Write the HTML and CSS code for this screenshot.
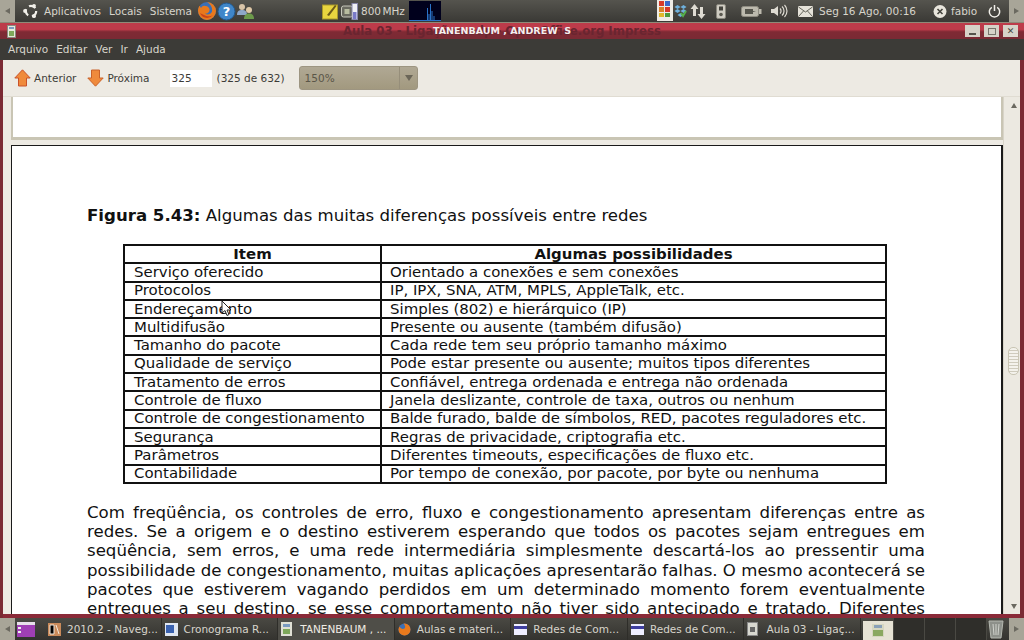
FILE: index.html
```html
<!DOCTYPE html>
<html lang="pt">

<head>
    <meta charset="UTF-8" />
    <link rel="stylesheet" href="styles.css">
    <title>TANENBAUM , ANDREW S</title>
</head>

<body>
    <div class="panel top-panel">
        <div class="panel-left">
            <div class="handle"><span class="arrow-left"></span></div>
            <svg class="ubuntu" width="18" height="18" viewBox="0 0 18 18">
                <circle cx="9" cy="9" r="5.2" fill="none" stroke="#f2f0ea" stroke-width="2.2" stroke-dasharray="7 3.9" />
                <circle cx="3" cy="9" r="1.9" fill="#f2f0ea" />
                <circle cx="12" cy="3.8" r="1.9" fill="#f2f0ea" />
                <circle cx="12" cy="14.2" r="1.9" fill="#f2f0ea" />
            </svg>
            <span class="panel-menu">Aplicativos</span>
            <span class="panel-menu">Locais</span>
            <span class="panel-menu">Sistema</span>
            <svg class="launcher" width="20" height="20" viewBox="0 0 20 20">
                <circle cx="10" cy="10" r="9" fill="#3b6fb5" />
                <path d="M10 1a9 9 0 1 1-9 9c0-2 .6-4 1.600-5.300L4 7c1-2 3-2.500 4-2 2-.5 4 1 4.500 3 .5 3-2 5-4.500 4.500 2 2 6 1 7-2 .8-3-1-7-5-9.500z" fill="#e8791c" />
                <path d="M3 12a7.500 7.500 0 0 0 13 2c-2 1.500-6 2-9 0-1.500-.8-3-1.500-4-2z" fill="#c9431a" />
            </svg>
            <svg class="launcher" width="19" height="19" viewBox="0 0 19 19">
                <circle cx="9.500" cy="9.500" r="8.500" fill="#3f86c9" stroke="#22598f" />
                <text x="9.500" y="14" text-anchor="middle" class="help-mark">?</text>
            </svg>
            <svg class="launcher" width="20" height="18" viewBox="0 0 20 18">
                <circle cx="6" cy="5" r="3" fill="#d8c4a8" />
                <path d="M1 13c0-4 2-5 5-5s5 1 5 5z" fill="#8ea7c9" />
                <circle cx="13" cy="8" r="3" fill="#e0c9a8" />
                <path d="M8 17c0-4 2-5.500 5-5.500s5 1.500 5 5.500z" fill="#6d9a4b" />
            </svg>
        </div>
        <svg class="note" width="17" height="17" viewBox="0 0 17 17">
            <rect x="0.500" y="2" width="15" height="14" fill="#e8d53f" stroke="#a8982a" />
            <path d="M5 12l8-10 1.500 1-7.500 10z" fill="#6b5a1a" />
        </svg>
        <svg class="cpu" width="17" height="17" viewBox="0 0 17 17">
            <rect x="0.500" y="3" width="11" height="11" rx="2" fill="#6a6a60" stroke="#c9c9bd" />
            <rect x="3.500" y="6" width="5" height="5" fill="#b9bda0" />
            <rect x="11" y="0.500" width="5.500" height="16" fill="#f0f0f5" stroke="#8888aa" />
            <rect x="12" y="9" width="3.500" height="7" fill="#7a7ac8" />
        </svg>
        <span class="mhz">800 MHz</span>
        <svg class="graph" width="32" height="20" viewBox="0 0 32 20">
            <rect width="32" height="20" fill="#00001c" />
            <path d="M0 19.500h32M18.500 19V7M20 19v-6M21.500 19V3M23 19v-9M25 19v-4" stroke="#2a72c8" fill="none" />
        </svg>
        <div class="panel-gap"></div>
        <svg class="tray-office" width="16" height="21" viewBox="0 0 16 21">
            <rect width="16" height="21" fill="#efece6" />
            <rect x="2" y="1" width="5" height="5" fill="#d63b2a" />
            <rect x="8" y="1" width="5" height="5" fill="#3b68c9" />
            <rect x="2" y="7" width="5" height="5" fill="#d9822a" />
            <rect x="8" y="7" width="5" height="5" fill="#d63b2a" />
            <rect x="2" y="13" width="5" height="4" fill="#e0b92a" />
            <rect x="8" y="13" width="5" height="4" fill="#4f9a3a" />
        </svg>
        <svg class="dropbox" width="13" height="14" viewBox="0 0 13 14">
            <path d="M3.500 1l3 2-3 2-3-2zM9.500 1l3 2-3 2-3-2zM3.500 5l3 2-3 2-3-2zM9.500 5l3 2-3 2-3-2zM6.500 9l3 2-3 2-3-2z" fill="#6fb0dc" />
            <path d="M7 9l2 3 3-5" stroke="#55b04a" stroke-width="2" fill="none" />
        </svg>
        <svg class="updown" width="16" height="15" viewBox="0 0 16 15">
            <path d="M4.500 0l4 5H6v7H3V5H.5zM11.500 15l4-5H13V3h-3v7H7.500z" fill="#dedbd2" />
        </svg>
        <svg class="phone" width="11" height="15" viewBox="0 0 11 15">
            <rect x="0.500" y="0.500" width="9" height="14" rx="1.500" fill="#cfccc2" stroke="#8a887e" />
            <rect x="3" y="2.500" width="4" height="4" fill="#44433d" />
            <circle cx="5" cy="10.500" r="1.800" fill="#5a5950" />
        </svg>
        <svg class="battery" width="21" height="11" viewBox="0 0 21 11">
            <rect x="0.500" y="0.500" width="17" height="10" rx="2" fill="#bdbaae" stroke="#8f8c82" />
            <rect x="18" y="3" width="2.500" height="5" fill="#bdbaae" />
            <path d="M4 3h8v5H4zM12 5l3 .5-3 .5z" fill="#55544c" />
        </svg>
        <svg class="volume" width="17" height="14" viewBox="0 0 17 14">
            <path d="M0 5h3l4-3v10l-4-3H0z" fill="#dedbd2" />
            <path d="M9 4.500a3.500 3.500 0 0 1 0 5M11 2.500a6 6 0 0 1 0 9M13.500 1a8.500 8.500 0 0 1 0 12" stroke="#dedbd2" fill="none" stroke-width="1.200" />
        </svg>
        <svg class="mail" width="15" height="11" viewBox="0 0 15 11">
            <rect width="15" height="11" rx="1" fill="#e6e3da" />
            <path d="M0.500 1l7 5 7-5M0.500 10.500l5-5.500M14.500 10.500l-5-5.500" stroke="#66655c" fill="none" />
        </svg>
        <span class="clock">Seg 16 Ago, 00:16</span>
        <svg class="user-off" width="15" height="15" viewBox="0 0 15 15">
            <circle cx="7" cy="7.500" r="6.500" fill="#e8e5dc" />
            <path d="M4.500 5l5 5M9.500 5l-5 5" stroke="#44433d" stroke-width="1.600" />
        </svg>
        <span class="user-name">fabio</span>
        <svg class="power" width="13" height="14" viewBox="0 0 13 14">
            <path d="M3.800 3.300a5.200 5.200 0 1 0 5.400 0M6.500 1v6" stroke="#f2f0ea" stroke-width="1.500" fill="none" />
        </svg>
        <div class="handle"><span class="arrow-right"></span></div>
    </div>

    <div class="window">
        <div class="titlebar">
            <svg class="doc-icon" width="9" height="13" viewBox="0 0 9 13">
                <rect x="0.500" y="0.500" width="8" height="12" fill="#e8e8dc" stroke="#8a8a80" />
                <rect x="2" y="2" width="5" height="2" fill="#7a9ac0" />
                <rect x="2" y="6" width="5" height="5" fill="#7ea85a" />
            </svg>
            <span class="title-ghost">Aula 03 - Ligações.odp - OpenOffice.org Impress</span>
            <span class="title-text">TANENBAUM , ANDREW&nbsp; S</span>
            <div class="win-buttons">
                <span class="win-btn"><i class="min-glyph"></i></span>
                <span class="win-btn"><i class="max-glyph"></i></span>
                <span class="win-btn close-glyph">✕</span>
            </div>
        </div>

        <div class="menubar">
            <span>Arquivo</span>
            <span>Editar</span>
            <span>Ver</span>
            <span>Ir</span>
            <span>Ajuda</span>
        </div>

        <div class="toolbar">
            <svg class="nav-icon" width="17" height="18" viewBox="0 0 17 18">
                <path d="M8.500 0.800L16.200 9H12.500V17H4.500V9H0.800z" fill="#ef8a3c" stroke="#c9522a" />
            </svg>
            <span class="nav-label">Anterior</span>
            <svg class="nav-icon next-icon" width="17" height="18" viewBox="0 0 17 18">
                <path d="M8.500 17.200L16.200 9H12.500V1H4.500V9H0.800z" fill="#ef8a3c" stroke="#c9622a" />
            </svg>
            <span class="nav-label">Próxima</span>
            <span class="page-input">325</span>
            <span class="page-count">(325 de 632)</span>
            <div class="zoom-select">
                <span class="zoom-value">150%</span>
                <span class="zoom-arrow"></span>
            </div>
        </div>

        <div class="viewer">
            <div class="pages">
                <div class="page-prev"></div>
                <div class="page">
                    <p class="caption"><b>Figura 5.43:</b> Algumas das muitas diferenças possíveis entre redes</p>
                    <table class="diff-table">
                        <tr><th class="col-item">Item</th><th>Algumas possibilidades</th></tr>
                        <tr><td>Serviço oferecido</td><td>Orientado a conexões e sem conexões</td></tr>
                        <tr><td>Protocolos</td><td>IP, IPX, SNA, ATM, MPLS, AppleTalk, etc.</td></tr>
                        <tr><td>Endereçamento</td><td>Simples (802) e hierárquico (IP)</td></tr>
                        <tr><td>Multidifusão</td><td>Presente ou ausente (também difusão)</td></tr>
                        <tr><td>Tamanho do pacote</td><td>Cada rede tem seu próprio tamanho máximo</td></tr>
                        <tr><td>Qualidade de serviço</td><td>Pode estar presente ou ausente; muitos tipos diferentes</td></tr>
                        <tr><td>Tratamento de erros</td><td>Confiável, entrega ordenada e entrega não ordenada</td></tr>
                        <tr><td>Controle de fluxo</td><td>Janela deslizante, controle de taxa, outros ou nenhum</td></tr>
                        <tr><td>Controle de congestionamento</td><td>Balde furado, balde de símbolos, RED, pacotes reguladores etc.</td></tr>
                        <tr><td>Segurança</td><td>Regras de privacidade, criptografia etc.</td></tr>
                        <tr><td>Parâmetros</td><td>Diferentes timeouts, especificações de fluxo etc.</td></tr>
                        <tr><td>Contabilidade</td><td>Por tempo de conexão, por pacote, por byte ou nenhuma</td></tr>
                    </table>
                    <p class="body-text">Com freqüência, os controles de erro, fluxo e congestionamento apresentam diferenças entre as redes. Se a origem e o destino estiverem esperando que todos os pacotes sejam entregues em seqüência, sem erros, e uma rede intermediária simplesmente descartá-los ao pressentir uma possibilidade de congestionamento, muitas aplicações apresentarão falhas. O mesmo acontecerá se pacotes que estiverem vagando perdidos em um determinado momento forem eventualmente entregues a seu destino, se esse comportamento não tiver sido antecipado e tratado. Diferentes</p>
                </div>
            </div>
            <div class="scrollbar">
                <span class="scroll-up"></span>
                <span class="scroll-thumb"></span>
                <span class="scroll-down"></span>
            </div>
            <svg class="cursor" width="11" height="17" viewBox="0 0 11 17">
                <path d="M1 1v12l3-2.500 2 5 2-1-2-4.500h4z" fill="#fff" stroke="#222" />
            </svg>
        </div>
    </div>

    <div class="panel bottom-panel">
        <div class="handle"><span class="arrow-left"></span></div>
        <svg class="desktop-icon" width="18" height="15" viewBox="0 0 18 15">
            <rect width="18" height="15" fill="#a03fb5" />
            <rect width="18" height="3" fill="#e8e0ea" />
            <rect x="1" y="5" width="3" height="2" fill="#eee" />
            <rect x="1" y="9" width="3" height="2" fill="#eee" />
        </svg>
        <div class="task"><svg width="13" height="13" viewBox="0 0 13 13"><rect width="13" height="13" fill="#c98a5a" /><path d="M2 2h4v9H2zM8 2l3 9" stroke="#f0e8dc" /></svg><span>2010.2 - Naveg...</span></div>
        <div class="task"><svg width="13" height="13" viewBox="0 0 13 13"><rect width="13" height="13" fill="#dfe6f2" /><rect x="1" y="2" width="8" height="8" fill="#3a62b0" /></svg><span>Cronograma R...</span></div>
        <div class="task task-active"><svg class="narrow-icon" width="11" height="14" viewBox="0 0 11 14"><rect width="11" height="14" fill="#e0e0d4" /><rect x="2" y="2" width="7" height="3" fill="#7a9ac0" /><rect x="2" y="7" width="7" height="5" fill="#7ea85a" /></svg><span>TANENBAUM , ...</span></div>
        <div class="task"><svg width="13" height="13" viewBox="0 0 13 13"><circle cx="6.500" cy="6.500" r="6" fill="#3b6fb5" /><path d="M6.500.5a6 6 0 1 1-6 6c0-1 .5-2 1-3 1 2 3 3 5 2 1-1 1-3-1-5z" fill="#e8791c" /></svg><span>Aulas e materi...</span></div>
        <div class="task"><svg width="13" height="11" viewBox="0 0 13 11"><rect width="13" height="11" fill="#eef" /><rect y="2" width="13" height="3" fill="#3f3fa0" /></svg><span>Redes de Com...</span></div>
        <div class="task"><svg width="13" height="11" viewBox="0 0 13 11"><rect width="13" height="11" fill="#eef" /><rect y="2" width="13" height="3" fill="#3f3fa0" /></svg><span>Redes de Com...</span></div>
        <div class="task"><svg class="narrow-icon" width="11" height="14" viewBox="0 0 11 14"><rect x="0.500" y="0.500" width="10" height="13" fill="#d8d8d0" stroke="#888" /><rect x="3" y="5" width="5" height="5" fill="#666" /></svg><span>Aula 03 - Ligaç...</span></div>
        <div class="pager">
            <div class="pager-cell pager-current">
                <svg width="12" height="13" viewBox="0 0 12 13"><rect width="12" height="13" fill="#d6d6c0" /><rect x="2" y="1" width="8" height="3" fill="#8aa0b8" /><rect x="1" y="6" width="10" height="6" fill="#8aa860" /></svg>
            </div>
            <div class="pager-cell"></div>
            <div class="pager-cell"></div>
            <div class="pager-cell"></div>
        </div>
        <svg class="trash" width="18" height="20" viewBox="0 0 18 20">
            <path d="M2 2h14l-2 17H4z" fill="#8d908a" stroke="#b5b8b0" />
            <path d="M6 5l1 11M12 5l-1 11M9 5v11" stroke="#d0d2cc" />
        </svg>
        <div class="handle"><span class="arrow-right"></span></div>
    </div>
</body>

</html>
```

FILE: styles.css
```css
* {
    margin: 0;
    padding: 0;
    box-sizing: border-box;
}

html,
body {
    width: 1024px;
    height: 640px;
    overflow: hidden;
}

body {
    display: flex;
    flex-direction: column;
    font-family: "DejaVu Sans", sans-serif;
    background: #3c3b37;
}

svg {
    display: block;
    flex-shrink: 0;
}

/* gnome panels */

.panel {
    display: flex;
    align-items: center;
    height: 22px;
    flex-shrink: 0;
    font-size: 10.500px;
    color: #d8d5cc;
    background: linear-gradient(#4a4943, #34332f);
}

.top-panel {
    background: linear-gradient(#55544e, #3a3935);
}

.panel-left {
    width: 322px;
    height: 22px;
    flex-shrink: 0;
    display: flex;
    align-items: center;
}

.handle {
    width: 15px;
    height: 22px;
    flex-shrink: 0;
    display: flex;
    align-items: center;
    justify-content: center;
    background: #a8a598;
}

.arrow-left {
    border: 3px solid transparent;
    border-left: 0;
    border-right: 5px solid #6b6960;
}

.arrow-right {
    border: 3px solid transparent;
    border-right: 0;
    border-left: 5px solid #6b6960;
}

.ubuntu {
    margin: 0 4px 0 7px;
}

.panel-menu {
    margin-right: 8px;
}

.panel-menu + .launcher {
    margin-left: -3px;
}

.help-mark {
    font-size: 13px;
    font-weight: 700;
    fill: #fff;
}

.note {
    margin-right: 2px;
}

.cpu {
    margin-right: 3px;
}

.mhz {
    width: 48px;
    word-spacing: -2px;
}

.panel-gap {
    flex: 1;
}

.tray-office {
    margin-right: 1px;
    align-self: flex-start;
}

.updown {
    margin-left: 3px;
}

.phone {
    margin-left: 10px;
}

.battery {
    margin-left: 14px;
}

.volume {
    margin-left: 9px;
}

.mail {
    margin-left: 10px;
}

.clock {
    margin-left: 6px;
    width: 114px;
    white-space: nowrap;
}

.user-name {
    margin-left: 3px;
    width: 37px;
}

.power {
    margin-right: 8px;
}

/* window */

.window {
    flex: 1;
    display: flex;
    flex-direction: column;
    min-height: 0;
    border-top: 1px solid #8f8a78;
    background: #7b2a34;
}

.titlebar {
    position: relative;
    height: 16px;
    flex-shrink: 0;
    font-weight: 700;
    background: linear-gradient(#bd3b4a 0, #bd3b4a 40%, #7f2a34 55%, #7a2a34 100%);
}

.doc-icon {
    position: absolute;
    left: 7px;
    top: 2px;
}

.title-ghost {
    position: absolute;
    left: 343px;
    top: 1px;
    font-size: 11.700px;
    color: #6a2530;
    white-space: nowrap;
}

.title-text {
    position: absolute;
    left: 433px;
    top: 2px;
    font-size: 9.500px;
    color: #f4eeee;
    white-space: nowrap;
}

.win-buttons {
    position: absolute;
    right: 6px;
    top: 2px;
    display: flex;
    gap: 4px;
}

.win-btn {
    width: 15px;
    height: 12px;
    background: #d6d2c8;
    display: flex;
    align-items: center;
    justify-content: center;
    color: #44423c;
    font-size: 9px;
    line-height: 1;
}

.min-glyph {
    width: 7px;
    height: 2px;
    margin-top: 5px;
    background: #55534c;
}

.max-glyph {
    width: 8px;
    height: 7px;
    border: 1px solid #77756c;
}

.menubar {
    height: 21px;
    flex-shrink: 0;
    display: flex;
    align-items: center;
    gap: 8px;
    padding: 0 0 1px 8px;
    font-size: 10.500px;
    color: #d8d5cc;
    background: #3c3b37;
}

.toolbar {
    height: 37px;
    flex-shrink: 0;
    display: flex;
    align-items: center;
    font-size: 10.500px;
    color: #3c3b37;
    margin: 0 4px 0 3px;
    padding-left: 11px;
    background: #edeae3;
    border-bottom: 1px solid #e0dcd2;
}

.nav-label {
    margin-left: 3px;
}

.next-icon {
    margin-left: 11px;
}

.page-input {
    width: 42px;
    height: 17px;
    margin-left: 20px;
    padding-left: 2px;
    line-height: 17px;
    background: #fff;
}

.page-count {
    margin-left: 5px;
}

.zoom-select {
    width: 119px;
    height: 24px;
    margin-left: 14px;
    display: flex;
    align-items: center;
    justify-content: space-between;
    border: 1px solid #9d9581;
    border-radius: 3px;
    color: #5a5648;
    background: linear-gradient(#b0a894, #a2997f);
}

.zoom-value {
    padding-left: 5px;
}

.zoom-arrow {
    width: 18px;
    height: 22px;
    display: flex;
    border-left: 1px solid #968e7a;
}

.zoom-arrow::after {
    content: "";
    margin: 8px 0 0 5px;
    height: 0;
    border: 4px solid transparent;
    border-bottom: 0;
    border-top: 6px solid #6b6658;
}

/* document area */

.viewer {
    position: relative;
    flex: 1;
    min-height: 0;
    display: flex;
    margin: 0 4px 0 3px;
    background: #edeae3;
    border-bottom: 4px solid #8a2a38;
}

.pages {
    width: 1000px;
    overflow: hidden;
    padding: 0 0 0 8px;
}

.page-prev {
    width: 992px;
    height: 43px;
    background: #fff;
    border: 2px solid #c9c5b4;
    border-top: 0;
    border-bottom-width: 3px;
}

.page {
    width: 992px;
    height: 600px;
    margin-top: 5px;
    padding: 60px 78px 0 75px;
    background: #fff;
    border: 1px solid #1a1a1a;
    border-right-width: 2px;
    color: #111;
}

.caption {
    font-size: 16.600px;
    line-height: 19px;
}

.diff-table {
    width: 764px;
    margin: 19px 0 19px 36px;
    border-collapse: collapse;
    table-layout: fixed;
    font-size: 14.950px;
}

.diff-table th,
.diff-table td {
    height: 18.300px;
    line-height: 15px;
    border: 2px solid #111;
    padding: 0 0 0 9px;
    text-align: left;
    white-space: nowrap;
}

.diff-table th {
    text-align: center;
    padding: 0;
}

.diff-table td + td {
    padding-left: 8px;
}

.col-item {
    width: 257px;
}

.body-text {
    width: 838px;
    font-size: 16.600px;
    line-height: 19.300px;
    text-align: justify;
    text-align-last: justify;
}

.scrollbar {
    position: relative;
    flex: 1;
    background: #ece9e1;
    border-left: 1px solid #d8d4c8;
}

.scroll-up,
.scroll-down {
    position: absolute;
    left: 7px;
    border: 3px solid transparent;
}

.scroll-up {
    top: 6px;
    border-top: 0;
    border-bottom: 5px solid #6b6960;
}

.scroll-down {
    bottom: 5px;
    border-bottom: 0;
    border-top: 5px solid #6b6960;
}

.scroll-thumb {
    position: absolute;
    top: 250px;
    left: 4px;
    width: 11px;
    height: 28px;
    border: 1px solid #c9c5b4;
    border-radius: 5px;
    background: repeating-linear-gradient(#f4f2ec 0 2px, #cfcbbd 2px 3px);
}

.cursor {
    position: absolute;
    left: 218px;
    top: 203px;
}

/* bottom panel */

.desktop-icon {
    margin: 0 10px 0 2px;
}

.task {
    width: 117px;
    height: 22px;
    display: flex;
    align-items: center;
    gap: 6px;
    padding-left: 3px;
    white-space: nowrap;
    border-right: 1px solid #2e2d29;
}

.narrow-icon {
    margin-right: 2px;
}

.task-active {
    background: #4f4e48;
    color: #efece4;
}

.pager {
    display: flex;
    height: 22px;
    margin-left: 2px;
}

.pager-cell {
    width: 31px;
    border-right: 1px solid #4a4943;
    background: #2f2e2a;
}

.pager-current {
    display: flex;
    align-items: center;
    justify-content: center;
    margin-top: 3px;
    background: #e6e2d4;
}

.trash {
    margin-left: auto;
    margin-right: 4px;
}
```
